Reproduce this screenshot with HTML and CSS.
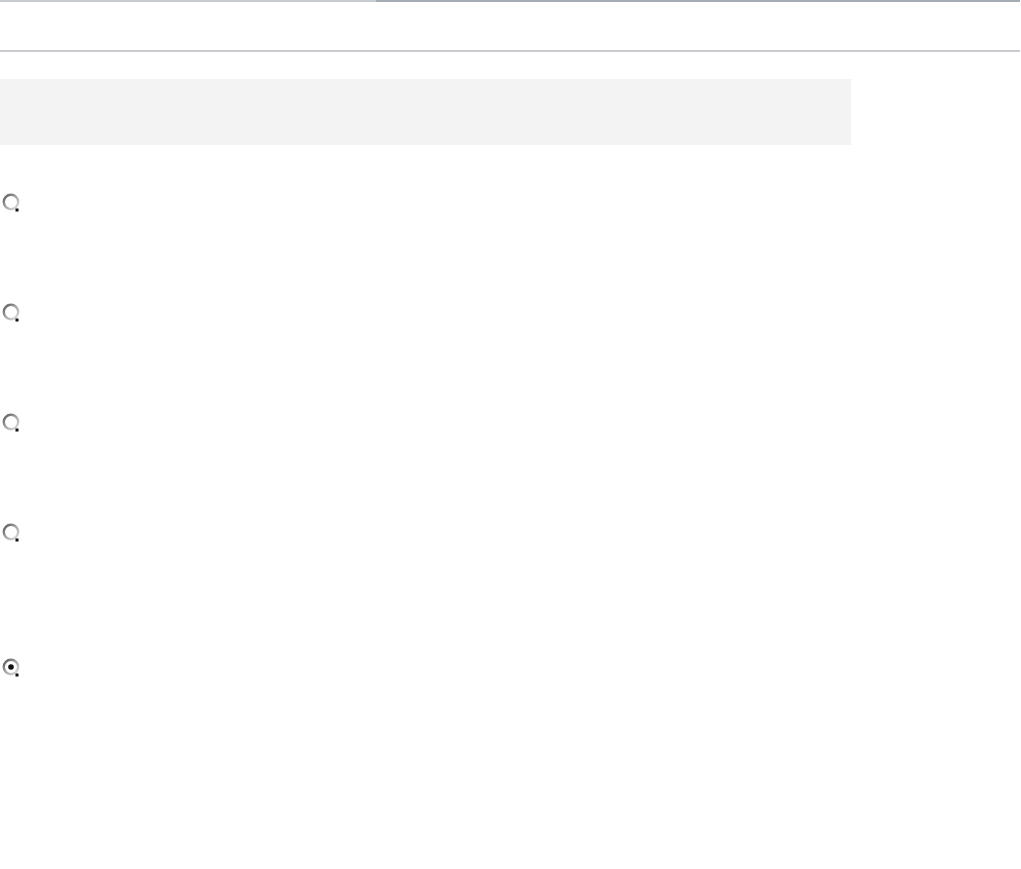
FILE: index.html
```html
<!DOCTYPE html>
<html lang="en">
	<head>
		<meta charset="UTF-8">
		<title>Options</title>
		<link rel="stylesheet" href="styles.css">
	</head>
	<body>
		<div class="progress">
			<div class="progress-done"></div>
			<div class="progress-rest"></div>
		</div>
		<div class="header"></div>
		<div class="notice"></div>
		<ul class="options">
			<li class="option">
				<svg class="radio" width="20" height="20" viewBox="0 0 20 20"><use href="#ring"/></svg>
			</li>
			<li class="option">
				<svg class="radio" width="20" height="20" viewBox="0 0 20 20"><use href="#ring"/></svg>
			</li>
			<li class="option">
				<svg class="radio" width="20" height="20" viewBox="0 0 20 20"><use href="#ring"/></svg>
			</li>
			<li class="option option-last">
				<svg class="radio" width="20" height="20" viewBox="0 0 20 20"><use href="#ring"/></svg>
			</li>
			<li class="option">
				<svg class="radio" width="20" height="20" viewBox="0 0 20 20">
					<use href="#ring"/>
					<circle cx="10" cy="10" r="2.8" fill="#111"/>
				</svg>
			</li>
		</ul>
		<svg width="0" height="0" class="defs">
			<defs>
				<linearGradient id="ringGrad" x1="0" y1="0" x2="1" y2="1">
					<stop offset="0" stop-color="#555"/>
					<stop offset="0.5" stop-color="#a8a8a8"/>
					<stop offset="1" stop-color="#e2e2e2"/>
				</linearGradient>
				<g id="ring">
					<circle cx="10" cy="10" r="7.2" fill="#fff" stroke="url(#ringGrad)" stroke-width="2.4"/>
					<rect x="14.5" y="16.5" width="3" height="3" fill="#111"/>
				</g>
			</defs>
		</svg>
	</body>
</html>
```

FILE: styles.css
```css
* {
	list-style: none;
	margin: 0;
	padding: 0;
}

body {
	background-color: #fff;
	font-family: "Liberation Sans", Arial, sans-serif;
}

.progress {
	display: flex;
	height: 2px;
	width: 1020px;
}

.progress-done {
	width: 376px;
	background-color: #c8ccd0;
}

.progress-rest {
	flex: 1;
	background-color: #a3acb4;
}

.header {
	height: 48px;
	width: 1020px;
	border-bottom: 2px solid #c8ccd0;
}

.notice {
	margin-top: 27px;
	width: 851px;
	height: 66px;
	background-color: #f3f3f3;
}

.options {
	padding-top: 47px;
	padding-left: 1px;
}

.option {
	height: 110px;
}

.option-last {
	height: 135px;
}

.radio {
	display: block;
}

.defs {
	position: absolute;
}
```
